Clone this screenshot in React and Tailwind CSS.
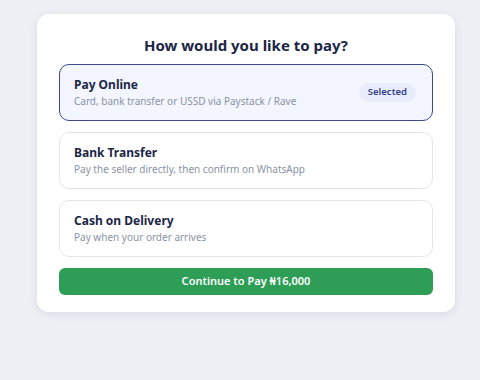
import React, { useState } from 'react';

const options = [
    { id: 'online', title: 'Pay Online', desc: 'Card, bank transfer or USSD via Paystack / Rave' },
    { id: 'bank', title: 'Bank Transfer', desc: 'Pay the seller directly, then confirm on WhatsApp' },
    { id: 'cod', title: 'Cash on Delivery', desc: 'Pay when your order arrives' },
];

const App = () => {
    const [selected, setSelected] = useState('online');

    return (
        <div className="min-h-screen bg-[#eef0f5] pt-[14px] pl-[37px] font-['Noto_Sans',sans-serif]">
            <div className="w-[418px] bg-white rounded-xl shadow-[0_2px_10px_rgba(30,40,80,0.10)] px-[22px] pt-[20px] pb-[17px]">
                <h2 className="text-center text-[15px] leading-[22px] font-bold text-[#1c2647] mb-[8px]">How would you like to pay?</h2>
                <div className="flex flex-col gap-[11px]">
                    {options.map((opt) => {
                        const isSel = selected === opt.id;
                        return (
                            <button
                                key={opt.id}
                                type="button"
                                onClick={() => setSelected(opt.id)}
                                className={
                                    isSel
                                        ? 'h-[57px] flex items-center justify-between text-left px-[14px] rounded-[10px] border border-[#3d4a8c] bg-[#f3f6ff]'
                                        : 'h-[57px] flex items-center justify-between text-left px-[14px] rounded-[10px] border border-[#e3e6ec] bg-white'
                                }
                            >
                                <div>
                                    <div className="text-[12px] leading-[18px] font-bold text-[#1c2647]">{opt.title}</div>
                                    <div className="text-[10px] leading-[15px] text-[#8a92a3]">{opt.desc}</div>
                                </div>
                                {isSel && (
                                    <span className="mr-[2px] px-[9px] py-[2px] rounded-full bg-[#e9edfb] text-[9.5px] font-semibold text-[#343f8c]">Selected</span>
                                )}
                            </button>
                        );
                    })}
                </div>
                <button type="button" className="mt-[11px] w-full h-[27px] rounded-md bg-[#2e9e57] text-white text-[11px] font-semibold">
                    Continue to Pay ₦16,000
                </button>
            </div>
        </div>
    );
};

export default App;
